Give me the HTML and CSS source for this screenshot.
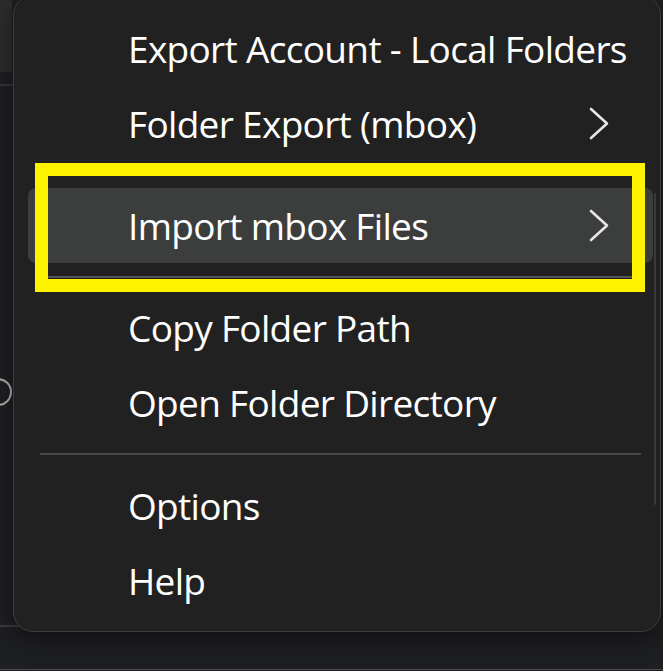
FILE: index.html
```html
<!DOCTYPE html>
<html lang="en">
<head>
<meta charset="utf-8">
<title>Context menu</title>
<link rel="stylesheet" href="styles.css">
</head>
<body>
<div class="desk">
  <div class="bg-block"></div>
  <div class="bg-hline"></div>
  <div class="bg-circle"></div>
  <div class="bg-bottom-line"></div>
  <div class="bg-edge-line"></div>

  <div class="menu">
    <div class="item"><span class="label">Export Account - Local Folders</span></div>
    <div class="item"><span class="label">Folder Export (mbox)</span>
      <svg class="chev" viewBox="0 0 20 33" width="20" height="33"><polyline points="2,2 18,16.5 2,31"/></svg>
    </div>
    <div class="item item-hover"><span class="label">Import mbox Files</span>
      <svg class="chev" viewBox="0 0 20 33" width="20" height="33"><polyline points="2,2 18,16.5 2,31"/></svg>
    </div>
    <div class="item"><span class="label">Copy Folder Path</span></div>
    <div class="item"><span class="label">Open Folder Directory</span></div>
    <div class="sep"></div>
    <div class="item"><span class="label">Options</span></div>
    <div class="item"><span class="label">Help</span></div>
    <div class="scroll-line"></div>
  </div>

  <div class="mark"><div class="mark-line"></div></div>
</div>
</body>
</html>
```

FILE: styles.css
```css
html, body {
  margin: 0;
  padding: 0;
  background: #1e1f22;
}

.desk {
  position: relative;
  width: 663px;
  height: 671px;
  overflow: hidden;
  background: #1e1f22;
  font-family: "Open Sans", "Noto Sans", "DejaVu Sans", sans-serif;
}

.bg-block {
  position: absolute;
  left: 0;
  top: 0;
  width: 12px;
  height: 72px;
  background: #2c2c2c;
}

.bg-hline {
  position: absolute;
  left: 0;
  top: 84px;
  width: 14px;
  height: 2px;
  background: #35363a;
}

.bg-circle {
  position: absolute;
  left: -16px;
  top: 378px;
  width: 24px;
  height: 24px;
  border: 2px solid #b0b0b0;
  border-radius: 50%;
}

.bg-bottom-line {
  position: absolute;
  left: 0;
  top: 625px;
  width: 20px;
  height: 2px;
  background: #3a3b3e;
}

.bg-edge-line {
  position: absolute;
  left: 0;
  bottom: 1px;
  width: 663px;
  height: 1px;
  background: #4a4a4c;
}

.menu {
  position: absolute;
  left: 13px;
  top: -5px;
  width: 648px;
  height: 637px;
  box-sizing: border-box;
  background: #212121;
  border: 1px solid #3c3c3c;
  border-radius: 20px;
  padding-top: 15px;
  display: flex;
  flex-direction: column;
  box-shadow: 0 8px 24px rgba(0, 0, 0, 0.45);
}

.item {
  height: 75px;
  margin: 0 7px 0 14px;
  padding: 0 44px 0 100px;
  display: flex;
  align-items: center;
  justify-content: space-between;
  border-radius: 8px;
  flex: none;
}

.label {
  color: #ffffff;
  font-size: 37px;
  letter-spacing: -0.68px;
  white-space: nowrap;
}

.item-hover {
  margin-top: 27px;
  margin-bottom: 27px;
  background: #3c3d3d;
}

.chev {
  flex: none;
  fill: none;
  stroke: #e6e6e6;
  stroke-width: 2.6;
  stroke-linecap: round;
  stroke-linejoin: round;
}

.sep {
  height: 2px;
  background: #4a4a4a;
  margin: 13px 19px 13px 26px;
  flex: none;
}

.scroll-line {
  position: absolute;
  right: 4px;
  top: 197px;
  width: 2px;
  height: 312px;
  border-radius: 1px;
  background: #3a3a3a;
}

.mark {
  position: absolute;
  left: 35px;
  top: 163px;
  width: 610px;
  height: 129px;
  box-sizing: border-box;
  border: 13px solid #fff200;
}

.mark-line {
  position: absolute;
  left: 0;
  right: 0;
  bottom: 1px;
  height: 2px;
  background: #555555;
}
```
